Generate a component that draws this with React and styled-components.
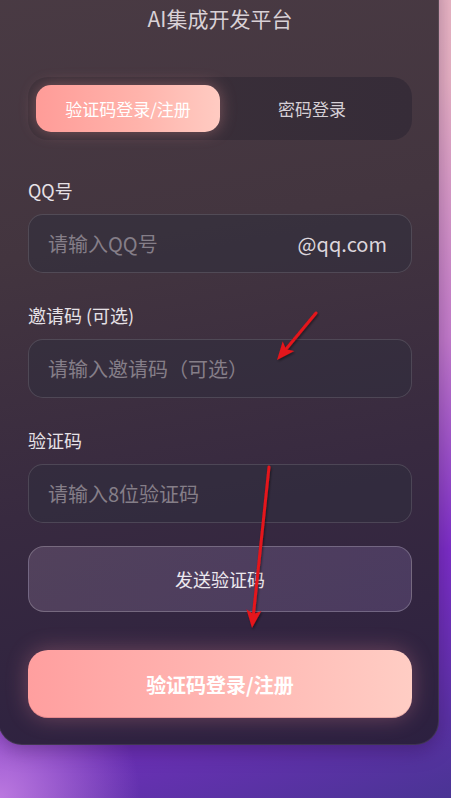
import React from "react";
import styled, { createGlobalStyle } from "styled-components";

const GlobalStyle = createGlobalStyle`
  html, body {
    margin: 0;
    padding: 0;
  }
  body {
    width: 451px;
    height: 798px;
    overflow: hidden;
    font-family: "Noto Sans CJK SC", "Noto Sans", sans-serif;
    background:
      radial-gradient(circle at 0% 100%, rgba(196, 128, 228, 0.9) 0px, rgba(196, 128, 228, 0) 140px),
      linear-gradient(160deg, #f2c4c8 0%, #e8b2c4 25%, #c47ccc 52%, #7c2ec8 74%, #4a3494 100%);
  }
`;

const Page = styled.div`
  position: relative;
  width: 451px;
  height: 798px;
`;

const Card = styled.div`
  width: 441px;
  box-sizing: border-box;
  margin-left: -2px;
  margin-top: -40px;
  padding: 44px 27px 27px 30px;
  border-radius: 24px;
  background: linear-gradient(170deg, #4a3b44 0%, #43353f 35%, #382a40 65%, #2c2040 100%);
  box-shadow: inset 0 0 0 1px rgba(255, 255, 255, 0.09), 0 6px 20px rgba(40, 10, 60, 0.35);
  display: flex;
  flex-direction: column;
`;

const Title = styled.h1`
  margin: 0;
  text-align: center;
  font-size: 21px;
  line-height: 28px;
  font-weight: 400;
  color: #d9d1d6;
`;

const Tabs = styled.div`
  margin-top: 45px;
  height: 63px;
  box-sizing: border-box;
  padding: 8px;
  border-radius: 20px;
  background: linear-gradient(90deg, #3b3039 0%, #362c38 100%);
  display: grid;
  grid-template-columns: 1fr 1fr;
  align-items: center;
`;

const Tab = styled.div`
  height: 47px;
  border-radius: 15px;
  display: flex;
  align-items: center;
  justify-content: center;
  font-size: 17px;
  color: ${(p) => (p.$active ? "#ffffff" : "#d6d0d6")};
  background: ${(p) =>
    p.$active ? "linear-gradient(90deg, #ff9c98 0%, #ffb3ab 55%, #ffcbc2 100%)" : "transparent"};
  box-shadow: ${(p) => (p.$active ? "0 0 16px rgba(255, 160, 160, 0.35)" : "none")};
`;

const Form = styled.div`
  margin-top: 38px;
  display: flex;
  flex-direction: column;
  gap: 30px;
`;

const Field = styled.div`
  display: flex;
  flex-direction: column;
`;

const Label = styled.label`
  font-size: 18px;
  line-height: 24px;
  color: #e6e1e6;
  margin-bottom: 12px;
`;

const InputBox = styled.div`
  height: 59px;
  box-sizing: border-box;
  border-radius: 15px;
  border: 1px solid rgba(255, 255, 255, 0.13);
  background: rgba(48, 46, 60, 0.55);
  display: flex;
  align-items: center;
  padding: 0 24px 0 19px;
`;

const Input = styled.input`
  flex: 1;
  min-width: 0;
  border: none;
  outline: none;
  background: transparent;
  font-family: inherit;
  font-size: 20px;
  color: #e6e1e6;
  padding: 0;
  &::placeholder {
    color: #857e88;
  }
`;

const Suffix = styled.span`
  font-size: 20px;
  color: #dcd6dc;
`;

const SendButton = styled.div`
  margin-top: 23px;
  height: 66px;
  box-sizing: border-box;
  border-radius: 16px;
  border: 1px solid rgba(255, 255, 255, 0.22);
  background: linear-gradient(90deg, rgba(120, 100, 130, 0.42) 0%, rgba(110, 90, 140, 0.42) 100%);
  display: flex;
  align-items: center;
  justify-content: center;
  font-size: 18px;
  color: #ece8ee;
`;

const LoginButton = styled.div`
  margin-top: 38px;
  height: 68px;
  border-radius: 20px;
  background: linear-gradient(90deg, #ff9f9f 0%, #ffb6b2 50%, #ffcdc4 100%);
  box-shadow: 0 0 22px rgba(255, 150, 160, 0.3), inset 0 -1px 0 rgba(150, 60, 80, 0.25);
  display: flex;
  align-items: center;
  justify-content: center;
  font-size: 20px;
  font-weight: 700;
  color: #ffffff;
`;

const Overlay = styled.svg`
  position: absolute;
  left: 0;
  top: 0;
  pointer-events: none;
`;

function Arrow({ x1, y1, x2, y2 }) {
  const dx = x2 - x1;
  const dy = y2 - y1;
  const len = Math.hypot(dx, dy);
  const ux = dx / len;
  const uy = dy / len;
  const hl = 18;
  const hw = 7.5;
  const bx = x2 - ux * hl;
  const by = y2 - uy * hl;
  const px = -uy;
  const py = ux;
  const pts = `${x2},${y2} ${bx + px * hw},${by + py * hw} ${bx + ux * 4},${by + uy * 4} ${bx - px * hw},${by - py * hw}`;
  return (
    <g filter="url(#sh)">
      <line x1={x1} y1={y1} x2={bx + ux * 5} y2={by + uy * 5} stroke="#e4141a" strokeWidth="3" strokeLinecap="round" />
      <polygon points={pts} fill="#e4141a" />
    </g>
  );
}

export default function App() {
  return (
    <>
      <GlobalStyle />
      <Page>
        <Card>
          <Title>AI集成开发平台</Title>
          <Tabs>
            <Tab $active>验证码登录/注册</Tab>
            <Tab>密码登录</Tab>
          </Tabs>
          <Form>
            <Field>
              <Label>QQ号</Label>
              <InputBox>
                <Input placeholder="请输入QQ号" />
                <Suffix>@qq.com</Suffix>
              </InputBox>
            </Field>
            <Field>
              <Label>邀请码 (可选)</Label>
              <InputBox>
                <Input placeholder="请输入邀请码（可选）" />
              </InputBox>
            </Field>
            <Field>
              <Label>验证码</Label>
              <InputBox>
                <Input placeholder="请输入8位验证码" />
              </InputBox>
            </Field>
          </Form>
          <SendButton>发送验证码</SendButton>
          <LoginButton>验证码登录/注册</LoginButton>
        </Card>
        <Overlay width="451" height="798" viewBox="0 0 451 798">
          <defs>
            <filter id="sh" x="-20%" y="-20%" width="140%" height="140%">
              <feDropShadow dx="1" dy="1.5" stdDeviation="1.2" floodColor="#000" floodOpacity="0.45" />
            </filter>
          </defs>
          <Arrow x1={316} y1={353} x2={277} y2={400} />
          <Arrow x1={269} y1={507} x2={252} y2={668} />
        </Overlay>
      </Page>
    </>
  );
}
